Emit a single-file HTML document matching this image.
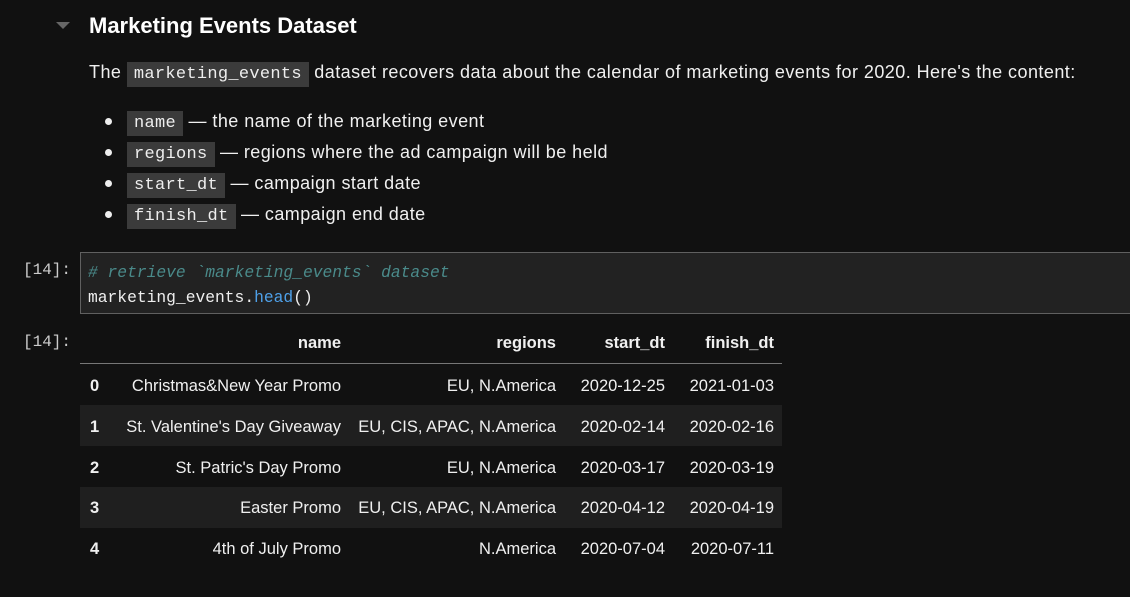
<!DOCTYPE html>
<html><head><meta charset="utf-8"><style>
html,body{margin:0;padding:0;background:#111111;width:1130px;height:597px;overflow:hidden;color:#f0f0f0;font-family:"Liberation Sans",sans-serif}
.a{position:absolute;white-space:nowrap}
.c{font-family:"Liberation Mono",monospace;background:#3b3b3b;padding:3px 7px;font-size:17px;color:#eee;letter-spacing:0.3px}
.t{font-size:18px;line-height:24px;letter-spacing:0.45px}
.b{width:7px;height:7px;border-radius:50%;background:#eee;position:absolute}
.row{position:absolute;left:80px;width:702px;height:41px}
.cell{position:absolute;font-size:16.5px;white-space:nowrap;text-align:right}
</style></head><body>
<div class="a" style="left:56px;top:22px;width:0;height:0;border-left:7px solid transparent;border-right:7px solid transparent;border-top:7px solid #666"></div>
<div class="a" style="left:89px;top:13px;font-size:22px;font-weight:bold;color:#fff">Marketing Events Dataset</div>
<div class="a t" style="left:89px;top:60px">The <span class="c">marketing_events</span> dataset recovers data about the calendar of marketing events for 2020. Here's the content:</div>
<div class="b" style="left:105px;top:118px"></div>
<div class="b" style="left:105px;top:149px"></div>
<div class="b" style="left:105px;top:180px"></div>
<div class="b" style="left:105px;top:211px"></div>
<div class="a t" style="left:127px;top:109px"><span class="c">name</span> — the name of the marketing event</div>
<div class="a t" style="left:127px;top:140px"><span class="c">regions</span> — regions where the ad campaign will be held</div>
<div class="a t" style="left:127px;top:171px"><span class="c">start_dt</span> — campaign start date</div>
<div class="a t" style="left:127px;top:202px"><span class="c">finish_dt</span> — campaign end date</div>

<div class="a" style="left:23px;top:261px;font-family:'Liberation Mono',monospace;font-size:16px;color:#ccc">[14]:</div>
<div class="a" style="left:80px;top:252px;width:1060px;height:60px;background:#222;border:1px solid #606060"></div>
<div class="a" style="left:88px;top:260px;font-family:'Liberation Mono',monospace;font-size:16.3px;line-height:25px;color:#eee">
<span style="color:#4a8a8a;font-style:italic"># retrieve `marketing_events` dataset</span><br>marketing_events.<span style="color:#4ea0e8">head</span>()</div>

<div class="a" style="left:23px;top:333px;font-family:'Liberation Mono',monospace;font-size:16px;color:#ccc">[14]:</div>
<div class="a" style="left:80px;top:363px;width:702px;height:1px;background:#777"></div>
<div class="row" style="top:405px;background:#1f1f1f"></div>
<div class="row" style="top:487px;background:#1f1f1f"></div>

<div class="cell" style="top:334px;right:789px;font-weight:bold">name</div>
<div class="cell" style="top:334px;right:574px;font-weight:bold">regions</div>
<div class="cell" style="top:334px;right:465px;font-weight:bold">start_dt</div>
<div class="cell" style="top:334px;right:356px;font-weight:bold">finish_dt</div>

<div class="cell" style="top:377px;left:90px;font-weight:bold">0</div>
<div class="cell" style="top:377px;right:789px">Christmas&amp;New Year Promo</div>
<div class="cell" style="top:377px;right:574px">EU, N.America</div>
<div class="cell" style="top:377px;right:465px">2020-12-25</div>
<div class="cell" style="top:377px;right:356px">2021-01-03</div>

<div class="cell" style="top:418px;left:90px;font-weight:bold">1</div>
<div class="cell" style="top:418px;right:789px">St. Valentine's Day Giveaway</div>
<div class="cell" style="top:418px;right:574px">EU, CIS, APAC, N.America</div>
<div class="cell" style="top:418px;right:465px">2020-02-14</div>
<div class="cell" style="top:418px;right:356px">2020-02-16</div>

<div class="cell" style="top:459px;left:90px;font-weight:bold">2</div>
<div class="cell" style="top:459px;right:789px">St. Patric's Day Promo</div>
<div class="cell" style="top:459px;right:574px">EU, N.America</div>
<div class="cell" style="top:459px;right:465px">2020-03-17</div>
<div class="cell" style="top:459px;right:356px">2020-03-19</div>

<div class="cell" style="top:499px;left:90px;font-weight:bold">3</div>
<div class="cell" style="top:499px;right:789px">Easter Promo</div>
<div class="cell" style="top:499px;right:574px">EU, CIS, APAC, N.America</div>
<div class="cell" style="top:499px;right:465px">2020-04-12</div>
<div class="cell" style="top:499px;right:356px">2020-04-19</div>

<div class="cell" style="top:540px;left:90px;font-weight:bold">4</div>
<div class="cell" style="top:540px;right:789px">4th of July Promo</div>
<div class="cell" style="top:540px;right:574px">N.America</div>
<div class="cell" style="top:540px;right:465px">2020-07-04</div>
<div class="cell" style="top:540px;right:356px">2020-07-11</div>
</body></html>
